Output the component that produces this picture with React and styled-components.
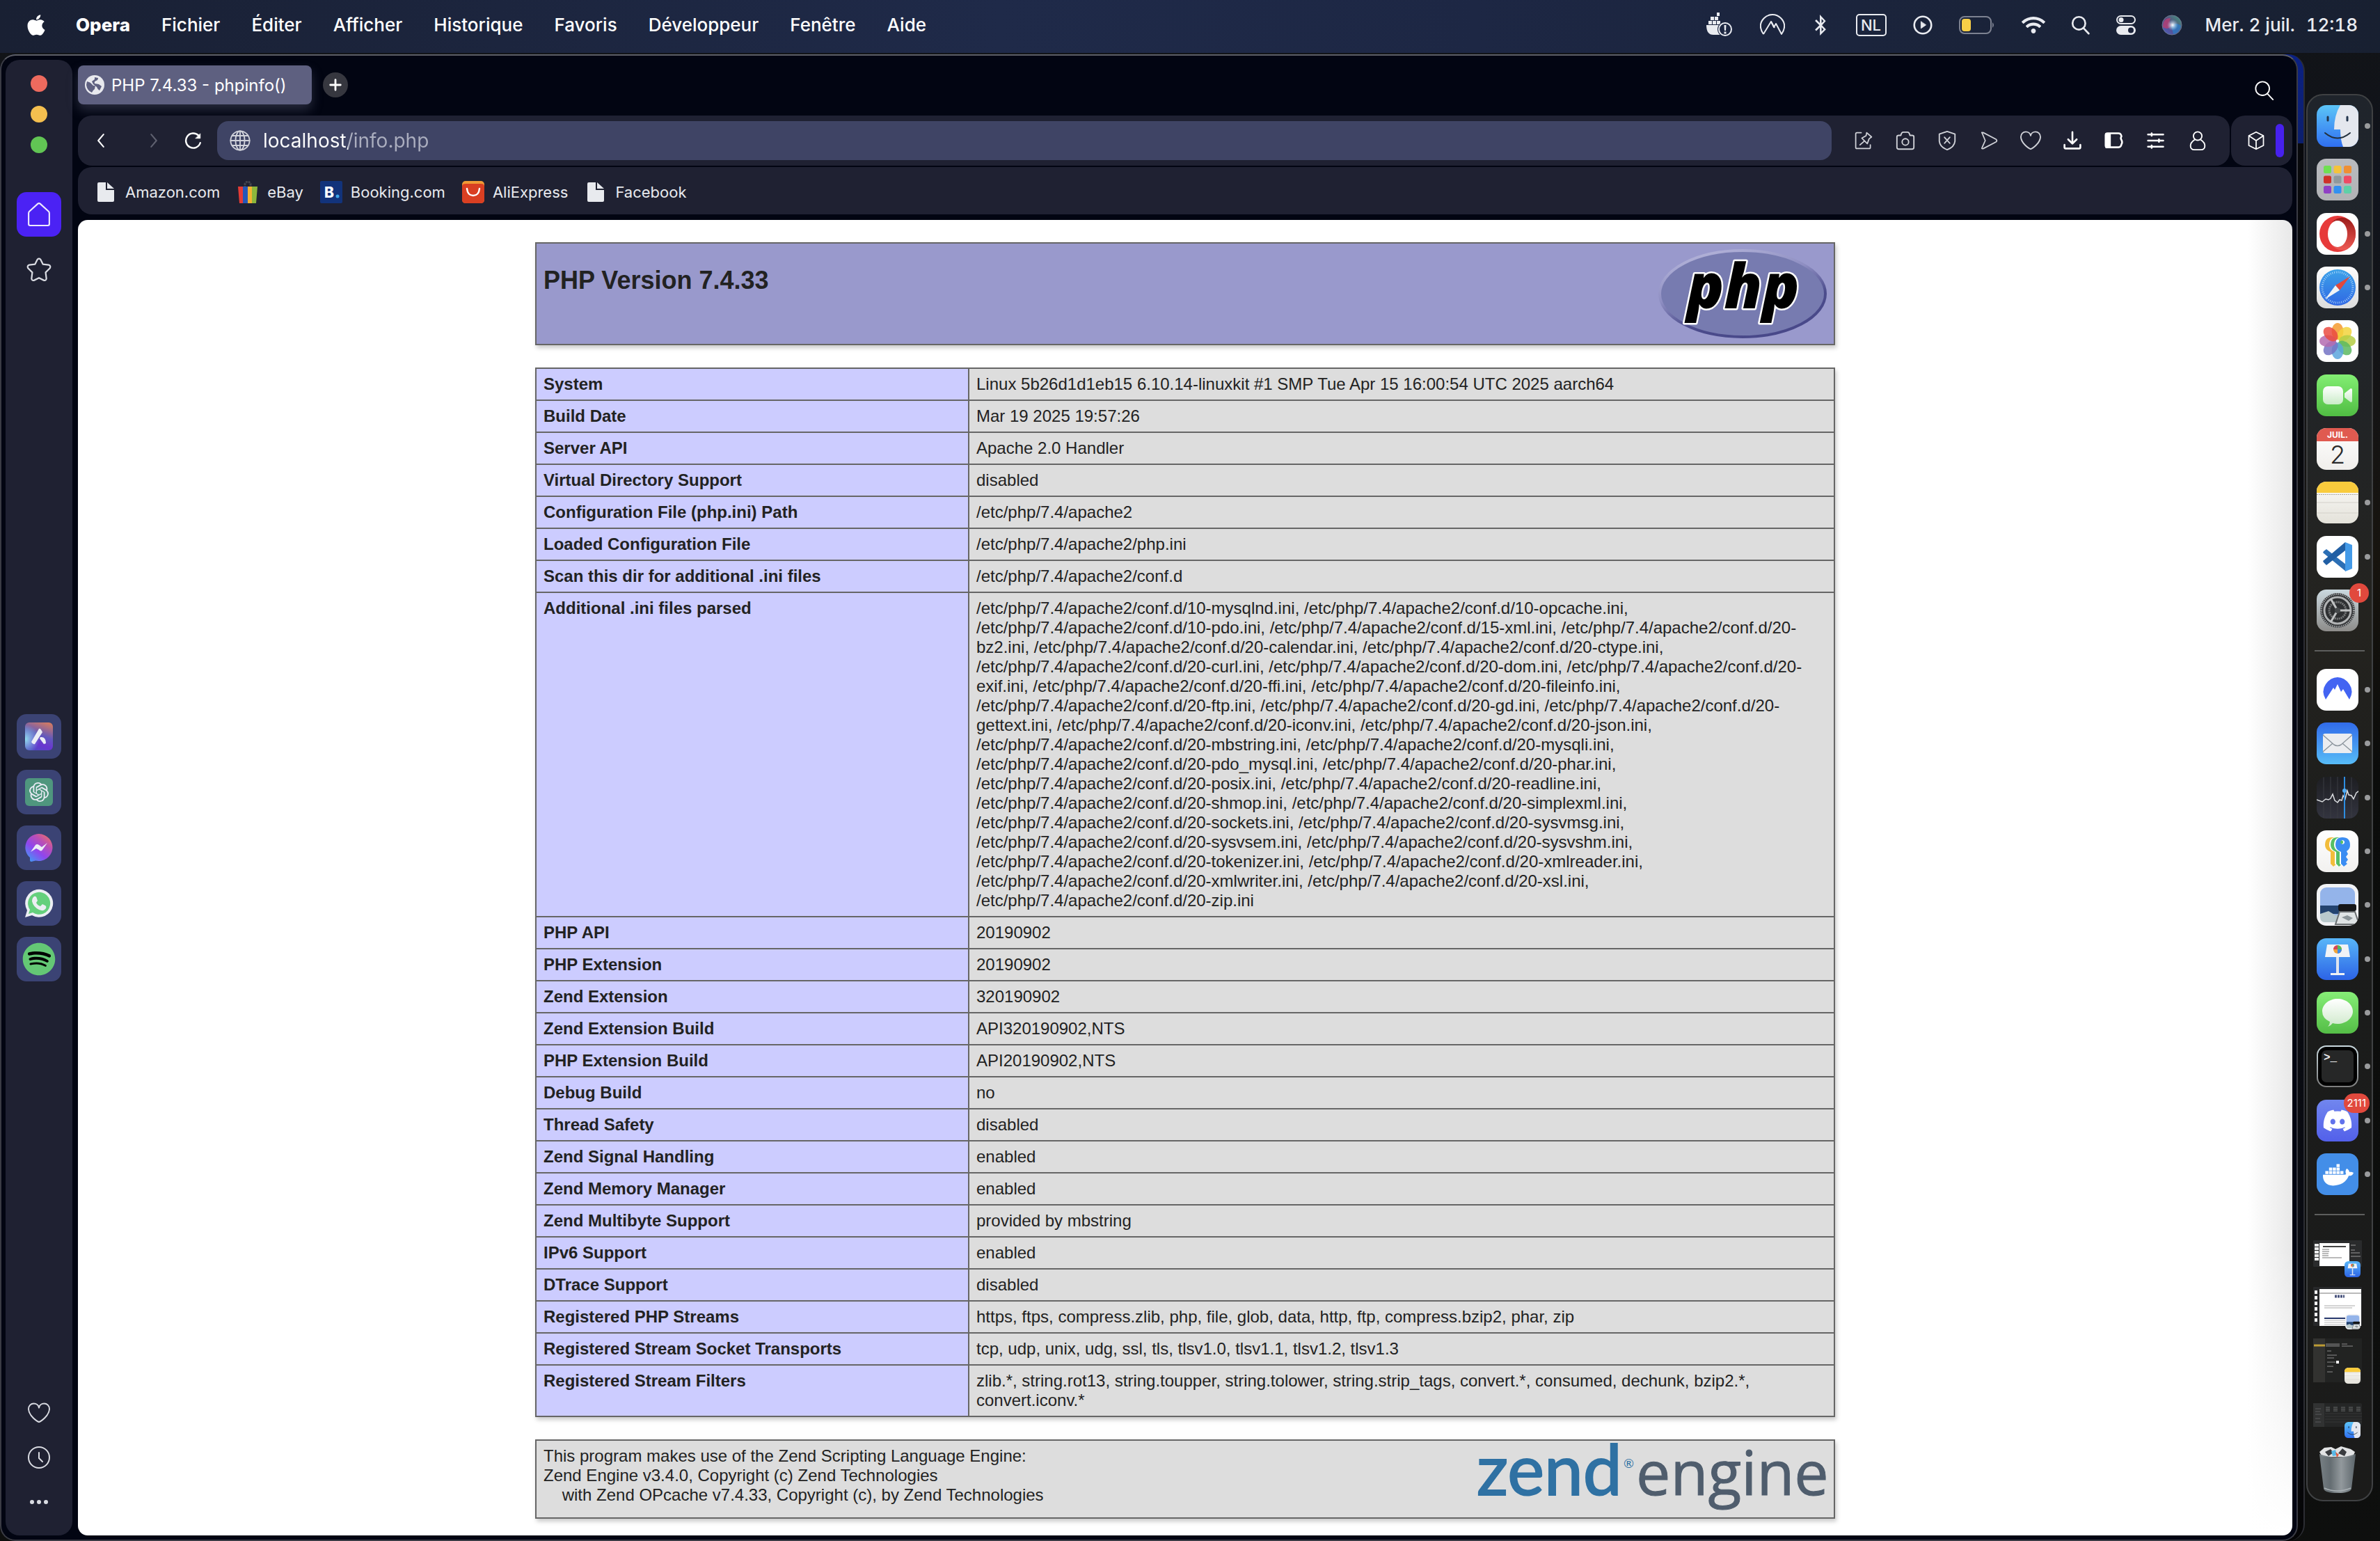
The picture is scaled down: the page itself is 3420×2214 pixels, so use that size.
import React from "react";
import styled, { createGlobalStyle, css } from "styled-components";
import { FaApple, FaBluetoothB, FaDocker, FaDiscord, FaSpotify, FaWifi } from "react-icons/fa";
import { SiOpenai } from "react-icons/si";

const ui = `Inter, "Liberation Sans", sans-serif`;
const page = `"Liberation Sans", Arial, sans-serif`;

const GlobalStyle = createGlobalStyle`
  *, *::before, *::after { box-sizing: border-box; }
  body { margin: 0; background: #0e0f10; }
  button { border: 0; padding: 0; background: none; color: inherit; font: inherit; cursor: pointer; }
  a { color: inherit; text-decoration: none; }
  svg { display: block; flex: none; }
`;

/* ---------- desktop shell ---------- */

const Desktop = styled.div`
  min-height: 100vh;
  display: flex;
  flex-direction: column;
  background: linear-gradient(180deg, #121416 0%, #10131c 12%, #17140f 36%, #0b0c0b 50%, #0e0f0e 100%);
  font-family: ${ui};
  color: #fff;
`;

const MenuBar = styled.header`
  height: 76px;
  display: flex;
  justify-content: space-between;
  align-items: center;
  padding: 0 32px 4px 40px;
  background: linear-gradient(90deg, #192033 0%, #1f2a49 42%, #1d2744 62%, #182031 100%);
  font-size: 26px;
  font-weight: 500;
  text-shadow: 0 2px 4px rgba(0, 0, 0, 0.4);
`;

const MenuList = styled.nav`
  display: flex;
  align-items: center;
  gap: 45px;
`;

const MenuItem = styled.button`
  line-height: 32px;
  font-weight: ${(p) => (p.$strong ? 800 : 500)};
`;

const AppleButton = styled.button`
  width: 24px;
  display: flex;
  justify-content: center;
  font-size: 34px;
`;

const StatusList = styled.div`
  display: flex;
  align-items: center;
  gap: 38px;
  color: #e9ebf0;
`;

const StatusButton = styled.button`
  display: flex;
  justify-content: center;
  width: ${(p) => p.$w}px;
`;

const InputSource = styled.button`
  width: 44px;
  height: 32px;
  border: 2px solid #e9ebf0;
  border-radius: 5px;
  font-size: 22px;
  line-height: 28px;
`;

const Clock = styled.button`
  display: flex;
  gap: 16px;
  margin-left: -4px;
  font-size: 26px;
  font-variant-numeric: tabular-nums;
  line-height: 32px;
`;

const Stage = styled.div`
  flex: 1;
  display: flex;
  align-items: center;
  gap: 2px;
  padding: 2px 10px 0 0;
`;

const WindowBehind = styled.div`
  flex: 1;
  min-width: 0;
  align-self: stretch;
  display: flex;
  padding-right: 8px;
  border-right: 2px solid #2c2d33;
  border-radius: 24px;
  background: linear-gradient(180deg, #0b2183 0, #0c1f6c 128px, #08090c 128px, #0a0c13 1800px, #050506 100%);
`;

const BrowserWindow = styled.main`
  flex: 1;
  min-width: 0;
  display: flex;
  gap: 8px;
  padding: 6px;
  border: 2px solid #3a3b44;
  border-top-color: #5c5e66;
  border-radius: 22px;
  background: #020512;
`;

/* ---------- browser sidebar ---------- */

const SideBar = styled.aside`
  width: 96px;
  display: flex;
  flex-direction: column;
  align-items: center;
  padding: 22px 0 16px;
  border-radius: 20px;
  background: #1f2132;
`;

const Lights = styled.div`
  display: flex;
  flex-direction: column;
  gap: 20px;
  margin-bottom: 56px;
`;

const Light = styled.button`
  width: 24px;
  height: 24px;
  border-radius: 50%;
  background: ${(p) => p.$color};
`;

const SideGroup = styled.div`
  display: flex;
  flex-direction: column;
  gap: ${(p) => p.$gap || 0}px;
`;

const AppGroup = styled(SideGroup)`
  margin: auto 0;
  padding-top: 18px;
`;

const SideButton = styled.button`
  width: 64px;
  height: 64px;
  display: grid;
  place-items: center;
  border-radius: 14px;
  color: ${(p) => p.$color || "#d9dbe2"};
  background: ${(p) => p.$bg || "transparent"};
`;

const AppTile = styled.span`
  width: 40px;
  height: 40px;
  display: grid;
  place-items: center;
  border-radius: 6px;
  font-size: 28px;
  color: #e9ebf5;
  background: ${(p) => p.$bg};
`;

/* ---------- browser chrome ---------- */

const Column = styled.div`
  flex: 1;
  min-width: 0;
  display: flex;
  flex-direction: column;
`;

const TabBar = styled.div`
  height: 80px;
  display: flex;
  align-items: flex-start;
  padding: 8px 20px 0 0;
`;

const Tab = styled.button`
  width: 336px;
  height: 56px;
  display: flex;
  align-items: center;
  gap: 10px;
  padding: 0 10px;
  border-radius: 8px;
  background: #5e6080;
  box-shadow: 0 8px 16px rgba(110, 112, 140, 0.35);
  font-size: 24px;
  color: #fff;
  white-space: nowrap;
`;

const NewTab = styled.button`
  width: 36px;
  height: 36px;
  margin: 10px auto 0 16px;
  display: grid;
  place-items: center;
  border-radius: 50%;
  background: #36373f;
`;

const TabSearch = styled.button`
  width: 40px;
  height: 72px;
  display: grid;
  place-items: center;
`;

const ToolRow = styled.div`
  display: flex;
  gap: 2px;
  margin-bottom: 2px;
`;

const panel = css`
  border-radius: 20px;
  background: #1f2132;
`;

const ToolBar = styled.div`
  ${panel}
  flex: 1;
  height: 72px;
  display: flex;
  align-items: center;
  padding-right: 16px;
`;

const NavButtons = styled.div`
  display: grid;
  grid-template-columns: 68px 80px 36px;
  margin-right: 16px;
`;

const IconButton = styled.button`
  width: ${(p) => (p.$w ? p.$w + "px" : "auto")};
  height: 56px;
  display: grid;
  place-items: center;
  color: ${(p) => p.$color || "#fff"};
`;

const Address = styled.label`
  flex: 1;
  height: 56px;
  display: flex;
  align-items: center;
  gap: 18px;
  margin-right: 16px;
  padding: 0 18px;
  border-radius: 16px;
  background: #3f4465;
  color: #d0d2da;
`;

const AddressInput = styled.input`
  flex: 1;
  min-width: 0;
  height: 40px;
  border: 0;
  padding: 0;
  outline: 0;
  font-family: ${ui};
  font-size: 28px;
  color: #fff;
  -webkit-text-fill-color: transparent;
  background: linear-gradient(90deg, #fff 122px, #abaebf 122px);
  -webkit-background-clip: text;
  background-clip: text;
`;

const SidePanelToggle = styled.div`
  ${panel}
  height: 72px;
  display: flex;
  align-items: center;
  padding: 0 12px 0 8px;
`;

const AccentBar = styled.span`
  width: 12px;
  height: 48px;
  border-radius: 6px;
  background: #4721ee;
`;

const Bookmarks = styled.nav`
  ${panel}
  height: 68px;
  display: flex;
  align-items: center;
  gap: 24px;
  margin-bottom: 8px;
  padding: 4px 24px 0;
  font-size: 22px;
  color: #e8eaee;
`;

const Bookmark = styled.a`
  display: flex;
  align-items: center;
  gap: 12px;
`;

/* ---------- phpinfo document ---------- */

const Viewport = styled.div`
  flex: 1;
  padding: 32px 0 24px;
  border-radius: 14px;
  background: linear-gradient(180deg, transparent 78%, #fff 100%),
    linear-gradient(90deg, #fff calc(100% - 64px), #e8e8e8 100%);
  font-family: ${page};
  font-size: 24px;
  line-height: 28px;
  color: #222;
`;

const Doc = styled.div`
  width: 1868px;
  max-width: 100%;
  margin: 0 auto;
  display: flex;
  flex-direction: column;
  gap: 32px;
`;

const InfoBox = styled.section`
  display: flex;
  justify-content: space-between;
  align-items: flex-start;
  padding: 8px 10px;
  border: 2px solid #666;
  background: ${(p) => p.$bg};
  box-shadow: 2px 4px 6px #ccc;
`;

const Title = styled.h1`
  margin: 24px 0 0;
  font-size: 36px;
  line-height: 42px;
`;

const Credits = styled.p`
  margin: 0;
`;

const InfoTable = styled.table`
  width: 100%;
  table-layout: fixed;
  border-collapse: collapse;
  box-shadow: 2px 4px 6px #ccc;
`;

const KeyCol = styled.col`
  width: 622px;
`;

const cell = css`
  padding: 8px 10px;
  border: 2px solid #666;
  text-align: left;
  vertical-align: top;
`;

const KeyCell = styled.th`
  ${cell}
  background: #ccf;
  font-weight: bold;
`;

const ValueCell = styled.td`
  ${cell}
  background: #ddd;
`;

/* ---------- dock ---------- */

const Dock = styled.nav`
  width: 96px;
  display: flex;
  flex-direction: column;
  padding: 14px 8px 9px;
  border: 2px solid #3f4143;
  border-radius: 24px;
  background: linear-gradient(180deg, #1f242b 0%, #20252b 12%, #24231f 38%, #1b1c1b 55%, #1b1b1a 100%);
`;

const DockGroup = styled.div`
  height: 756px;
  display: flex;
  flex-direction: column;
  justify-content: space-between;
`;

const DockItem = styled.button`
  position: relative;
  width: 86px;
  height: 60px;
  display: grid;
  grid-template-columns: 70px 16px;
  place-items: center;
`;

const RunningDot = styled.span`
  width: 8px;
  height: 8px;
  border-radius: 50%;
  background: #9a9b9d;
`;

const Badge = styled.span`
  position: absolute;
  top: -9px;
  right: ${(p) => (p.$wide ? 5 : 6)}px;
  min-width: 28px;
  height: 28px;
  padding: 0 5px;
  border-radius: 14px;
  background: #e1493d;
  color: #fff;
  font-size: 15px;
  line-height: 28px;
  text-align: center;
`;

const DockRule = styled.hr`
  width: 72px;
  height: 2px;
  margin: ${(p) => (p.$last ? "27px 0 36px 2px" : "27px 0 25px 2px")};
  border: 0;
  background: #5d5e5d;
`;

const DockWindows = styled.div`
  display: flex;
  flex-direction: column;
  gap: 12px;
`;

const DockWindow = styled.button`
  width: 70px;
  display: flex;
  justify-content: center;
`;

/* ---------- line icons (32 unit grid) ---------- */

const Line = ({ d, size = 32, sw = 2, fill = "none", children }) => (
  <svg width={size} height={size} viewBox="0 0 32 32" fill={fill} stroke="currentColor" strokeWidth={sw} strokeLinecap="round" strokeLinejoin="round" aria-hidden="true">
    {d && <path d={d} />}
    {children}
  </svg>
);

const HEART = "M16 29C13 28 1.500 20 1 10.500C1 5.500 4.500 2.500 8.500 2.500C12.500 2.500 15.500 5 16 8.500C16.500 5 19.500 2.500 23.500 2.500C27.500 2.500 31 5.500 31 10.500C30.500 20 19 28 16 29Z";

const SearchIcon = ({ size = 32, sw = 2 }) => (
  <Line size={size} sw={sw}><circle cx="13" cy="13" r="10.500" /><path d="M20.500 21L29 30" /></Line>
);

const FileIcon = () => (
  <svg width="32" height="32" viewBox="0 0 32 32" fill="#e8eaee" aria-hidden="true">
    <path d="M4 4q0-2 2-2h10v11h12v15q0 2-2 2H6q-2 0-2-2zM18 2l10 9H18z" />
  </svg>
);

const EbayIcon = () => (
  <svg width="32" height="32" viewBox="0 0 32 32" aria-hidden="true">
    <path d="M12 10V4q4-6 8 0v6" fill="none" stroke="#43464f" strokeWidth="3" strokeDasharray="3 1" />
    <path d="M2 8h7v24H4z" fill="#e43b35" /><path d="M9 8h8v24H9z" fill="#2557b8" />
    <path d="M16 8h7v24h-7z" fill="#f3b231" /><path d="M22 8h8l-2 24h-6z" fill="#8cb63c" />
  </svg>
);

const BookingIcon = () => (
  <svg width="32" height="32" viewBox="0 0 32 32" aria-hidden="true">
    <rect width="32" height="32" rx="2" fill="#12337b" />
    <text x="6" y="24" fontFamily="Inter, sans-serif" fontWeight="800" fontSize="21" fill="#fff">B</text>
    <circle cx="25" cy="22" r="2.500" fill="#3da5e8" />
  </svg>
);

const AliIcon = () => (
  <svg width="32" height="32" viewBox="0 0 32 32" aria-hidden="true">
    <rect width="32" height="32" rx="5" fill="#ef9a35" />
    <path d="M0 8q0-4 5-4h22q5 0 5 4v19q0 5-5 5H5q-5 0-5-5z" fill="#d93f22" />
    <path d="M7 11q1 10 9 10t9-10" fill="none" stroke="#fff" strokeWidth="2.500" strokeLinecap="round" />
  </svg>
);

const TabGlobe = () => (
  <svg width="28" height="28" viewBox="0 0 28 28" aria-hidden="true">
    <circle cx="14" cy="14" r="14" fill="#e8e9ee" />
    <path d="M3 9q5 1 7 4t5 2l-1 5q-3 2-4 5Q3 22 2 14zM14 3l5 1q0 3-3 4t-2 4l6 1 4 3-3 6q-3-2-4-5l-5-4-2-4 4-3z" fill="#5e6080" />
  </svg>
);

const GlobeIcon = () => (
  <Line size={30}>
    <circle cx="16" cy="16" r="14.500" /><ellipse cx="16" cy="16" rx="7" ry="14.500" />
    <path d="M16 1.500v29M1.500 16h29M4 8.500h24M4 23.500h24" />
  </Line>
);

/* ---------- menu bar drawings ---------- */

const DockerAlert = () => (
  <svg width="40" height="36" viewBox="0 0 40 36" fill="#e9ebf0" aria-hidden="true">
    <path d="M1 18h24q-5 5-4 14H11Q1 32 1 18z" />
    <path d="M4 12h5v5H4zM10 12h5v5h-5zM16 12h5v5h-5zM7 6h5v5H7zM13 6h5v5h-5zM16 0h4v5h-4z" />
    <circle cx="28" cy="24" r="11" fill="#1c2641" /><circle cx="28" cy="24" r="9" fill="none" stroke="#e9ebf0" strokeWidth="2" />
    <path d="M26.500 18h3l-.5 8h-2zM26.500 27.500h3v3h-3z" />
  </svg>
);

const NordOutline = () => (
  <svg width="36" height="32" viewBox="0 0 36 32" fill="none" stroke="#e9ebf0" strokeWidth="2" strokeLinejoin="round" aria-hidden="true">
    <path d="M5 29C-1 20 0 12 6 6Q11 1 18 1T30 6C36 12 37 20 31 29L23 14l-3 5-4-8-11 18" /><path d="M16 11l5 9" />
  </svg>
);

const Battery = () => (
  <svg width="52" height="26" viewBox="0 0 52 26" aria-hidden="true">
    <rect x="1" y="1" width="45" height="24" rx="7" fill="none" stroke="#7d8291" strokeWidth="2" />
    <rect x="4" y="4" width="13" height="18" rx="4" fill="#f8cf47" /><path d="M48 9q4 4 0 8z" fill="#7d8291" />
  </svg>
);

const ControlCenter = () => (
  <svg width="28" height="28" viewBox="0 0 28 28" aria-hidden="true">
    <rect x="1" y="1" width="26" height="11" rx="5.500" fill="none" stroke="#e9ebf0" strokeWidth="2" /><circle cx="7" cy="6.500" r="3.500" fill="#e9ebf0" />
    <rect y="15" width="28" height="13" rx="6.500" fill="#e9ebf0" /><circle cx="21" cy="21.500" r="4" fill="#1b233a" />
  </svg>
);

const Siri = () => (
  <svg width="30" height="30" viewBox="0 0 30 30" aria-hidden="true">
    <defs>
      <linearGradient id="siri" x1="0" y1="1" x2="1" y2="0"><stop offset="0" stopColor="#4a62c9" /><stop offset="0.500" stopColor="#594b80" /><stop offset="1" stopColor="#3da07d" /></linearGradient>
      <radialGradient id="siriGlow"><stop offset="0" stopColor="#fff" /><stop offset="1" stopColor="#9fd6f0" stopOpacity="0" /></radialGradient>
    </defs>
    <circle cx="15" cy="15" r="14" fill="url(#siri)" stroke="#6f7890" /><path d="M2 18Q2 5 13 5q-3 6 1 10-3 8-12 3z" fill="#b93e72" opacity="0.800" />
    <path d="M14 16q7-6 14 0-2 11-11 12z" fill="#2d7ac4" opacity="0.800" /><circle cx="16" cy="15" r="8" fill="url(#siriGlow)" />
  </svg>
);

/* ---------- logos of the document ---------- */

const PhpLogo = () => (
  <svg width="242" height="128" viewBox="0 0 242 128" overflow="visible" role="img" aria-label="PHP logo">
    <defs>
      <linearGradient id="phpRim" x1="0.200" y1="0" x2="0.700" y2="1">
        <stop offset="0" stopColor="#b5b5da" /><stop offset="0.400" stopColor="#8e8ec2" /><stop offset="0.700" stopColor="#4c4c8c" /><stop offset="1" stopColor="#484889" />
      </linearGradient>
    </defs>
    <ellipse cx="121" cy="64" rx="119" ry="62" fill="#777bb0" stroke="url(#phpRim)" strokeWidth="4" />
    <text x="41" y="85" fontFamily='"Open Sans", sans-serif' fontSize="88" fontWeight="800" fontStyle="italic" fill="#000" stroke="#fff" strokeWidth="5" strokeLinejoin="round" paintOrder="stroke">php</text>
  </svg>
);

const ZendLogo = () => (
  <svg width="500" height="94" viewBox="0 0 500 94" overflow="visible" role="img" aria-label="Zend engine logo">
    <text x="-3" y="70" fontFamily="Lato, sans-serif" fontSize="100" fill="#2f71a3" stroke="#2f71a3" strokeWidth="2">zend</text>
    <text x="208" y="31" fontFamily="Lato, sans-serif" fontSize="18" fill="#2f71a3">®</text>
    <text x="226" y="70" fontFamily='"Open Sans", sans-serif' fontSize="88" fill="#4f5d6d" stroke="#4f5d6d" strokeWidth="1">engine</text>
  </svg>
);

/* ---------- dock artwork (60 unit grid) ---------- */

const Grad = ({ id, from, to }) => (
  <linearGradient id={id} x1="0" y1="0" x2="0" y2="1"><stop offset="0" stopColor={from} /><stop offset="1" stopColor={to} /></linearGradient>
);

const Tile = ({ id, from, to = from, size = 60, children }) => (
  <svg width={size} height={size} viewBox="0 0 60 60" aria-hidden="true">
    <defs><Grad id={`g-${id}`} from={from} to={to} /><clipPath id={`c-${id}`}><rect width="60" height="60" rx="14" /></clipPath></defs>
    <rect width="60" height="60" rx="14" fill={`url(#g-${id})`} />
    <g clipPath={`url(#c-${id})`}>{children}</g>
  </svg>
);

const Finder = ({ id = "finder", size }) => (
  <Tile id={id} from="#5cc5f8" to="#2f6ff0" size={size}>
    <path d="M34 0Q25 15 25 35h9q0 15 4 25h22V0z" fill="#e4e7ee" />
    <path d="M16 17v5M44 17v5" stroke="#22344c" strokeWidth="3" strokeLinecap="round" />
    <path d="M12 40q18 15 36 0" fill="none" stroke="#22303c" strokeWidth="2" strokeLinecap="round" />
  </Tile>
);

const LAUNCH = ["#6fe052", "#f5c33b", "#ee8f34", "#cf3028", "#8f989b", "#ef4a64", "#9040c4", "#3390f0", "#5fd0a8"];
const Launchpad = () => (
  <Tile id="launch" from="#b9bbbf" to="#b1b2b5">
    {LAUNCH.map((c, i) => <rect key={c} x={10 + (i % 3) * 14.5} y={10 + Math.floor(i / 3) * 14.5} width="11" height="11" rx="2.500" fill={c} />)}
  </Tile>
);

const Opera = () => (
  <Tile id="opera" from="#fff">
    <defs><linearGradient id="operaBack" x1="0" y1="0" x2="0" y2="1"><stop offset="0" stopColor="#9c1c1a" /><stop offset="1" stopColor="#ee5a54" /></linearGradient></defs>
    <circle cx="30" cy="30" r="26" fill="#e73a3a" />
    <path d="M22 13Q34 2 47 10 56 18 56 30T47 50Q34 58 22 47 44 51 44 30T22 13z" fill="url(#operaBack)" />
    <ellipse cx="30" cy="30" rx="14" ry="19" fill="#fff" />
  </Tile>
);

const Safari = () => (
  <Tile id="safari" from="#fdfdfd" to="#dcdcdc">
    <defs><Grad id="sea" from="#3ca2e9" to="#3068e4" /></defs>
    <circle cx="30" cy="30" r="26" fill="url(#sea)" />
    <circle cx="30" cy="30" r="22" fill="none" stroke="#b8dcfa" strokeWidth="3" strokeDasharray="0.800 2" />
    <path d="M48 14L33 34l-6-7z" fill="#e2483c" /><path d="M12 47l15-20 6 7z" fill="#f1f3f6" />
  </Tile>
);

const PETALS = ["#f49b2f", "#f2d43c", "#b4cc44", "#5cb860", "#5aa4dd", "#7473c4", "#b46bb0", "#ea4b41"];
const Photos = () => (
  <Tile id="photos" from="#fff">
    {PETALS.map((c, i) => <ellipse key={c} cx="30" cy="16" rx="8.500" ry="12" fill={c} opacity="0.850" transform={`rotate(${i * 45} 30 30)`} />)}
  </Tile>
);

const FaceTime = () => (
  <Tile id="facetime" from="#83ee73" to="#50bd43">
    <defs><Grad id="cam" from="#fff" to="#c9ecc7" /></defs>
    <rect x="9" y="17" width="29" height="26" rx="7" fill="url(#cam)" /><path d="M40 27l9-7q2 0 2 2v16q0 2-2 2l-9-7z" fill="url(#cam)" />
  </Tile>
);

const Calendar = () => (
  <Tile id="calendar" from="#fff" to="#f0eeeb">
    <path d="M0 0h60v19H0z" fill="#e05a50" />
    <text x="30" y="14" textAnchor="middle" fontFamily="Inter, sans-serif" fontSize="12" fontWeight="700" fill="#fff">JUIL.</text>
    <text x="30" y="51" textAnchor="middle" fontFamily="Inter, sans-serif" fontSize="36" fontWeight="300" fill="#2b2b2b">2</text>
  </Tile>
);

const Notes = ({ id = "notes", size }) => (
  <Tile id={id} from="#fbfaf8" to="#e4e2da" size={size}>
    <path d="M0 0h60v16H0z" fill="#f9cb3c" /><path d="M0 18.500h60" stroke="#a9a7a0" strokeDasharray="2 1" /><path d="M0 30h60M0 45h60" stroke="#d2d0c9" />
  </Tile>
);

const VsCode = () => (
  <Tile id="vscode" from="#fff">
    <path d="M10 22l4-3 28 22v10L9 24z" fill="#2c6fb5" /><path d="M10 38l-1-2L41 9v12L14 42z" fill="#215fa4" />
    <path d="M41 9l10 4v34l-10 4z" fill="#439ae8" />
  </Tile>
);

const Settings = () => (
  <Tile id="settings" from="#cbd9df" to="#8d8c8a">
    <circle cx="30" cy="30" r="25" fill="#2e3032" /><circle cx="30" cy="30" r="23.500" fill="none" stroke="#9b9ea0" strokeWidth="3" strokeDasharray="1.500 1.200" />
    <circle cx="30" cy="30" r="19" fill="none" stroke="#b0b2b3" strokeWidth="3" /><circle cx="30" cy="30" r="12" fill="none" stroke="#77797a" strokeWidth="3" strokeDasharray="2 1" />
    <path d="M30 30h19M30 30L20 13M30 30L20 47" stroke="#bfc1c2" strokeWidth="3" /><circle cx="30" cy="30" r="4" fill="#46494b" />
  </Tile>
);

const Nord = () => (
  <Tile id="nord" from="#fff">
    <path d="M13 44Q6 32 13 22 20 12 30 12t17 10 0 22L38 29l-3 4-5-11-4 8-2-3z" fill="#4364f2" />
  </Tile>
);

const Mail = () => (
  <Tile id="mail" from="#316bea" to="#57bcf7">
    <rect x="9" y="16" width="42" height="28" rx="3" fill="#ebedf0" /><path d="M9 18l16 14q5 3 10 0l16-14M9 42l14-12M51 42L37 30" fill="none" stroke="#8e979f" strokeWidth="1.500" />
  </Tile>
);

const Stocks = () => (
  <Tile id="stocks" from="#1d1e22" to="#33343f">
    <path d="M10 0v60M20 0v60M30 0v60M50 0v60" stroke="#3b3c43" />
    <path d="M0 33l8 3 5-4 4 1 3-2 3-6 3 9 4 3 3-4 3 1 2-7 3 5 3-12 2 6 4 1 3 5 4-9 6-4" fill="none" stroke="#dcdee1" strokeWidth="1.500" />
    <path d="M40 0v60" stroke="#2d8de0" strokeWidth="2" /><circle cx="40" cy="20" r="3" fill="#55adf2" />
  </Tile>
);

const Key = ({ x, color }) => (
  <path transform={`translate(${x} 0)`} fill={color} fillRule="evenodd" d="M10 10q11 0 11 11 0 6-5 9l2 4-3 4 3 4-3 4 2 2-5 4-4-4V31q-8-3-8-10 0-11 10-11zm0 4a3 3 0 1 0 .1 0z" />
);
const Passwords = () => (
  <Tile id="keys" from="#fff" to="#f2f1ef"><Key x={12} color="#f2bd3c" /><Key x={18} color="#fff" /><Key x={20} color="#56bf66" /><Key x={25} color="#fff" /><Key x={27} color="#3b8df2" /></Tile>
);

const Preview = ({ id = "preview", size }) => (
  <Tile id={id} from="#f2f3f5" size={size}>
    <rect x="5" y="5" width="50" height="50" rx="9" fill="#94b4ea" /><path d="M5 31h50v12H5z" fill="#23436f" /><path d="M5 43l12-4 10 6 28-4v14H12q-7 0-7-8z" fill="#b9c9cc" />
    <rect x="31" y="29" width="26" height="10" rx="3" fill="#151618" /><path d="M33 40h22l6 18H27z" fill="#dfe3e4" stroke="#6a6e70" strokeWidth="2" />
    <path d="M36 48l8-3 8 4-6 4z" fill="#8c9599" />
  </Tile>
);

const Keynote = ({ id = "keynote", size }) => (
  <Tile id={id} from="#58b6f8" to="#2c63e6" size={size}>
    <path d="M15 9h30l3 18H12z" fill="#f1f3f6" /><path d="M28 27h4v24h-4z" fill="#dfe4ee" /><path d="M20 50h20v3H20z" fill="#eef1f5" />
    <circle cx="30" cy="16" r="6" fill="#f0a23a" /><path d="M30 16v-6a6 6 0 0 1 6 6z" fill="#55b85a" /><path d="M30 16h6a6 6 0 0 1-6 6z" fill="#3d8be8" /><path d="M30 16h-6a6 6 0 0 1 6-6z" fill="#d8435a" />
  </Tile>
);

const Messages = () => (
  <Tile id="messages" from="#86ee77" to="#54bd46">
    <defs><Grad id="bubble" from="#fff" to="#cfe9cb" /></defs>
    <path d="M30 10c12 0 22 8 22 18S42 46 30 46q-4 0-7-1-3 4-7 5 3-3 3-7Q8 38 8 28c0-10 10-18 22-18z" fill="url(#bubble)" />
  </Tile>
);

const Terminal = () => (
  <Tile id="terminal" from="#c9d8de" to="#7d7d7d">
    <rect x="2" y="2" width="56" height="56" rx="12" fill="#000" /><rect x="7" y="7" width="46" height="46" rx="7" fill="#262727" />
    <text x="10" y="22" fontFamily='"Liberation Mono", monospace' fontSize="16" fontWeight="700" fill="#eee">&gt;_</text>
  </Tile>
);

const Discord = () => (
  <Tile id="discord" from="#7186ee" to="#5360ea"><FaDiscord x="8" y="8" size={44} color="#fff" /></Tile>
);

const Docker = () => (
  <Tile id="docker" from="#438ee8"><FaDocker x="9" y="9" size={44} color="#fff" /></Tile>
);

const Trash = () => (
  <svg width="54" height="68" viewBox="0 0 54 68" aria-hidden="true">
    <defs><linearGradient id="bin" x1="0" y1="0" x2="1" y2="0"><stop offset="0" stopColor="#7d868b" /><stop offset="0.300" stopColor="#697277" /><stop offset="0.600" stopColor="#9aa1a5" /><stop offset="1" stopColor="#606a70" /></linearGradient></defs>
    <path d="M1 8L8 2l10-1 6 3 8-4 14 4 6 4-3 7H5z" fill="#e2e3e4" />
    <path d="M1 11q25 9 52 0l-6 50q-2 6-20 6T7 61z" fill="url(#bin)" opacity="0.940" /><path d="M8 60q18 8 38 0" fill="none" stroke="#aab1b5" strokeWidth="1.500" />
    <path d="M9 8l8-4 4 5-7 5zM28 10l6-7 6 5-3 6z" fill="#3a3c40" /><path d="M18 7l6-2 2 8-6 1z" fill="#59b8e6" /><path d="M24 8l5 4-3 4z" fill="#e05a3d" />
  </svg>
);

const MiniSlides = () => (
  <svg width="70" height="55" viewBox="0 0 70 55" aria-hidden="true">
    <rect width="70" height="38" rx="1" fill="#2a2b2c" /><rect x="9" y="4" width="43" height="33" fill="#fff" />
    {[5, 10, 15, 20, 25].map((y) => <rect key={y} x="2" y={y} width="6" height="4" fill="#ececec" />)}
    <path d="M14 9h33" stroke="#444" strokeWidth="2" /><path d="M13 13h10M13 16h10M13 19h9M13 22h9M13 25h28" stroke="#777" /><path d="M54 7h7M54 14h6M54 18h13M54 23h14" stroke="#999" />
    <svg x="45" y="30" width="24" height="24"><Keynote id="keynoteMini" size={23} /></svg>
  </svg>
);

const MiniPdf = () => (
  <svg width="70" height="62" viewBox="0 0 70 62" aria-hidden="true">
    <rect width="70" height="56" rx="1" fill="#27282a" /><rect x="9" y="3" width="60" height="53" fill="#fff" /><path d="M9 9h60" stroke="#777" />
    {[5, 13, 21, 29, 37, 45].map((y) => <rect key={y} x="2" y={y} width="4" height="5" fill="#f3f3f3" />)}
    <path d="M31 13.500h14" stroke="#4a557e" strokeWidth="4" strokeDasharray="3 1" /><path d="M16 27h44M16 30h40" stroke="#aaa" />
    <path d="M16 45h30" stroke="#26376c" strokeWidth="2" /><path d="M16 48h30M16 51h30M16 54h30" stroke="#bbb" />
    <svg x="46" y="39" width="24" height="23"><Preview id="previewMini" size={22} /></svg>
  </svg>
);

const MiniNotes = () => (
  <svg width="70" height="81" viewBox="0 0 70 81" aria-hidden="true">
    <rect y="0" width="70" height="63" fill="#222322" /><rect width="17" height="63" fill="#323230" /><path d="M1 10h16" stroke="#bd9b35" strokeWidth="3" />
    <rect x="18" y="7" width="20" height="5" fill="#555" /><path d="M41 8h8M41 11h16M20 18h6M20 24h14M20 28h10M20 34h12M20 40h9M20 48h8" stroke="#8b8b8b" /><rect x="33" y="32" width="4" height="4" fill="#fff" />
    <svg x="45" y="42" width="24" height="24"><Notes id="notesMini" size={23} /></svg>
  </svg>
);

const MiniFinder = () => (
  <svg width="70" height="50" viewBox="0 0 70 50" aria-hidden="true">
    <rect width="70" height="34" rx="2" fill="#252626" /><rect width="16" height="34" fill="#313232" />
    <path d="M18 6h50M18 8.500h50M18 11h50" stroke="#6b6c6c" strokeDasharray="6 5" /><path d="M17 15h53M17 19h53M17 23h53M17 27h53" stroke="#363737" />
    <path d="M3 8h8M3 12h7M3 16h9M3 22h7M3 27h8" stroke="#5a5b5c" />
    <svg x="45" y="27" width="24" height="23"><Finder id="finderMini" size={23} /></svg>
  </svg>
);

/* ---------- data ---------- */

const MENUS = ["Fichier", "Éditer", "Afficher", "Historique", "Favoris", "Développeur", "Fenêtre", "Aide"];

const BOOKMARKS = [
  ["Amazon.com", FileIcon],
  ["eBay", EbayIcon],
  ["Booking.com", BookingIcon],
  ["AliExpress", AliIcon],
  ["Facebook", FileIcon],
];

const ini = (name) => `/etc/php/7.4/apache2/conf.d/${name}.ini`;
const INI_FILES = [
  "10-mysqlnd", "10-opcache", "10-pdo", "15-xml", "20-bz2", "20-calendar", "20-ctype", "20-curl", "20-dom", "20-exif", "20-ffi",
  "20-fileinfo", "20-ftp", "20-gd", "20-gettext", "20-iconv", "20-json", "20-mbstring", "20-mysqli", "20-pdo_mysql", "20-phar",
  "20-posix", "20-readline", "20-shmop", "20-simplexml", "20-sockets", "20-sysvmsg", "20-sysvsem", "20-sysvshm", "20-tokenizer",
  "20-xmlreader", "20-xmlwriter", "20-xsl", "20-zip",
].map(ini).join(", ");

const ROWS = [
  ["System", "Linux 5b26d1d1eb15 6.10.14-linuxkit #1 SMP Tue Apr 15 16:00:54 UTC 2025 aarch64"],
  ["Build Date", "Mar 19 2025 19:57:26"],
  ["Server API", "Apache 2.0 Handler"],
  ["Virtual Directory Support", "disabled"],
  ["Configuration File (php.ini) Path", "/etc/php/7.4/apache2"],
  ["Loaded Configuration File", "/etc/php/7.4/apache2/php.ini"],
  ["Scan this dir for additional .ini files", "/etc/php/7.4/apache2/conf.d"],
  ["Additional .ini files parsed", INI_FILES],
  ["PHP API", "20190902"],
  ["PHP Extension", "20190902"],
  ["Zend Extension", "320190902"],
  ["Zend Extension Build", "API320190902,NTS"],
  ["PHP Extension Build", "API20190902,NTS"],
  ["Debug Build", "no"],
  ["Thread Safety", "disabled"],
  ["Zend Signal Handling", "enabled"],
  ["Zend Memory Manager", "enabled"],
  ["Zend Multibyte Support", "provided by mbstring"],
  ["IPv6 Support", "enabled"],
  ["DTrace Support", "disabled"],
  ["Registered PHP Streams", "https, ftps, compress.zlib, php, file, glob, data, http, ftp, compress.bzip2, phar, zip"],
  ["Registered Stream Socket Transports", "tcp, udp, unix, udg, ssl, tls, tlsv1.0, tlsv1.1, tlsv1.2, tlsv1.3"],
  ["Registered Stream Filters", "zlib.*, string.rot13, string.toupper, string.tolower, string.strip_tags, convert.*, consumed, dechunk, bzip2.*, convert.iconv.*"],
];

const DOCK_TOP = [
  ["Finder", Finder, true], ["Launchpad", Launchpad, false], ["Opera", Opera, true], ["Safari", Safari, true], ["Photos", Photos, false],
  ["FaceTime", FaceTime, false], ["Calendrier", Calendar, false], ["Notes", Notes, true], ["Visual Studio Code", VsCode, true], ["Réglages", Settings, false, "1"],
];

const DOCK_RUNNING = [
  ["NordVPN", Nord, true], ["Mail", Mail, true], ["Bourse", Stocks, true], ["Mots de passe", Passwords, true], ["Aperçu", Preview, true],
  ["Keynote", Keynote, true], ["Messages", Messages, true], ["Terminal", Terminal, true], ["Discord", Discord, true, "2111"], ["Docker", Docker, true],
];

const DOCK_WINDOWS = [["Présentation", MiniSlides], ["Document", MiniPdf], ["Notes", MiniNotes], ["Dossier", MiniFinder], ["Corbeille", Trash]];

const EXTENSIONS = [
  ["Épingler", "#d0d2d8", <Line key="i" size={28} d="M12 3H5q-2 0-2 2v22q0 2 2 2h20q2 0 2-2v-4M21 3l8 7-4 3-3 8-9-9 7-4zM17 17L10 23" />],
  ["Capture", "#d0d2d8", <Line key="i" size={30}><path d="M3 10q0-2 3-2h3q1-5 4-5h6q3 0 4 5h3q3 0 3 2v16q0 3-3 3H6q-3 0-3-3z" /><circle cx="16" cy="18" r="5" /></Line>],
  ["Protection", "#d0d2d8", <Line key="i" size={30} d="M16 2l12 4v11q-1 9-12 13Q5 26 4 17V6zM12 11l8 9M20 11l-8 9" />],
  ["Envoyer", "#d0d2d8", <Line key="i" size={28} d="M5 4Q3 2 7 3l21 11q2 2 0 4L7 29q-4 1-2-2l5-11z" />],
  ["Favori", "#d0d2d8", <Line key="i" size={30} d={HEART} />],
  ["Téléchargements", "#fff", <Line key="i" size={28} sw={3} d="M16 2v18M9 14l7 7 7-7M3 23v4q0 2 2 2h22q2 0 2-2v-4" />],
  ["Panneau", "#fff", <Line key="i" size={28} sw={3}><path d="M5 4h18q4 0 5 5-2 3 0 6 2 4 0 7-1 5-5 5H5q-3 0-3-3V7q0-3 3-3z" /><path d="M3 5h6v22H3z" fill="currentColor" /></Line>],
  ["Configuration", "#fff", <Line key="i" size={28} sw={3} d="M3 6h25M3 16h25M3 26h25M9 4v4M21 14v4M9 24v4" />],
  ["Profil", "#fff", <Line key="i" size={30}><circle cx="16" cy="9" r="6.500" /><path d="M11 15q-6 4-6 9 0 6 6 6h10q6 0 6-6 0-5-6-9" /></Line>],
];

const renderDockItem = ([name, Art, running, badge]) => (
  <DockItem key={name} aria-label={name}>
    <Art />
    {running ? <RunningDot /> : <span />}
    {badge && <Badge $wide={badge.length > 1}>{badge}</Badge>}
  </DockItem>
);

export default function App() {
  return (
    <Desktop>
      <GlobalStyle />
      <MenuBar>
        <MenuList>
          <AppleButton aria-label="Apple"><FaApple /></AppleButton>
          <MenuItem $strong>Opera</MenuItem>
          {MENUS.map((m) => <MenuItem key={m}>{m}</MenuItem>)}
        </MenuList>
        <StatusList>
          <StatusButton $w={40} aria-label="Docker"><DockerAlert /></StatusButton>
          <StatusButton $w={36} aria-label="NordVPN"><NordOutline /></StatusButton>
          <StatusButton $w={26} aria-label="Bluetooth"><FaBluetoothB size={30} /></StatusButton>
          <InputSource>NL</InputSource>
          <StatusButton $w={28} aria-label="Lecture">
            <Line size={28} sw={3}><circle cx="16" cy="16" r="14" /><path d="M13 10.500v11l8-5.500z" fill="currentColor" strokeWidth="1" /></Line>
          </StatusButton>
          <StatusButton $w={52} aria-label="Batterie"><Battery /></StatusButton>
          <StatusButton $w={34} aria-label="Wi-Fi"><FaWifi size={34} /></StatusButton>
          <StatusButton $w={26} aria-label="Rechercher"><SearchIcon size={28} sw={3} /></StatusButton>
          <StatusButton $w={28} aria-label="Centre de contrôle"><ControlCenter /></StatusButton>
          <StatusButton $w={28} aria-label="Siri"><Siri /></StatusButton>
          <Clock><span>Mer. 2 juil.</span><span>12:18</span></Clock>
        </StatusList>
      </MenuBar>

      <Stage>
        <WindowBehind>
          <BrowserWindow>
            <SideBar>
              <Lights>
                <Light $color="#ed6a5e" aria-label="Fermer" />
                <Light $color="#f4bf4f" aria-label="Réduire" />
                <Light $color="#61c554" aria-label="Agrandir" />
              </Lights>
              <SideGroup $gap={16}>
                <SideButton $bg="#4b22f4" $color="#eeeafd" aria-label="Accueil">
                  <Line size={34} d="M14.500 1.500q1.500-1 3 0L29 12q1 1 1 2.500V29q0 2-2 2H4q-2 0-2-2V14.500Q2 13 3 12z" />
                </SideButton>
                <SideButton aria-label="Favoris">
                  <Line size={36} d="M14 2.500q2-2 4 0l3 6 7.500 1q3 1 1.500 4l-5.500 5.500 1 8q-.5 3-3.500 2L16 26l-6 3q-3 1-3.500-2l1-8L2 13.500q-1.500-3 1.500-4l7.500-1z" />
                </SideButton>
              </SideGroup>
              <AppGroup $gap={16}>
                <SideButton $bg="#3b4374" aria-label="Aria">
                  <AppTile $bg="radial-gradient(circle at 0 60%, #8fe0ec, transparent 45%), linear-gradient(200deg, #d37a62 5%, #6158bd 45%, #6a35d0 70%, #4a4fc0)">
                    <svg width="26" height="26" viewBox="0 0 26 26" fill="#eceef6" aria-hidden="true"><path d="M13 2q2-1 4 3l1 2L7 24q-3 1-5-3zM15 14q8-1 8 9l-3 1-6-8z" /></svg>
                  </AppTile>
                </SideButton>
                <SideButton $bg="#3b4374" aria-label="ChatGPT"><AppTile $bg="#4f967e"><SiOpenai /></AppTile></SideButton>
                <SideButton $bg="#3b4374" aria-label="Messenger">
                  <svg width="40" height="40" viewBox="0 0 40 40" aria-hidden="true">
                    <defs><linearGradient id="msn" x1="0.100" y1="1" x2="0.900" y2="0"><stop offset="0" stopColor="#3da0f5" /><stop offset="0.400" stopColor="#8f46ee" /><stop offset="0.700" stopColor="#bb4fb4" /><stop offset="1" stopColor="#f37460" /></linearGradient></defs>
                    <path d="M20 0a20 19.500 0 1 1-5 38.500L9 40q-2 0-2-2v-4A20 19.500 0 0 1 20 0z" fill="url(#msn)" />
                    <path d="M8 26l7-10q2-2 5 0l4 3 8-6-7 10q-2 3-5 0l-4-2z" fill="#eceef6" />
                  </svg>
                </SideButton>
                <SideButton $bg="#3b4374" aria-label="WhatsApp">
                  <svg width="42" height="42" viewBox="0 0 42 42" aria-hidden="true">
                    <path d="M1 41l3-10A20 20 0 1 1 11 38z" fill="#eceef3" /><path d="M6 36l2-6a16 16 0 1 1 4 4z" fill="#65d07c" />
                    <path d="M14 11q3-1 4 3l1 3-2 3q2 4 6 5l3-3 4 2q2 1 1 4-3 5-10 2-8-4-10-12 0-5 3-7z" fill="#eceef3" />
                  </svg>
                </SideButton>
                <SideButton $bg="radial-gradient(circle, #000 20px, #3b4374 21px)" $color="#64c875" aria-label="Spotify"><FaSpotify size={48} /></SideButton>
              </AppGroup>
              <SideGroup>
                <SideButton aria-label="J'aime"><Line size={32} d={HEART} /></SideButton>
                <SideButton aria-label="Historique"><Line size={32}><circle cx="16" cy="16" r="15" /><path d="M16 9v8l5 5" /></Line></SideButton>
                <SideButton aria-label="Plus">
                  <svg width="28" height="8" viewBox="0 0 28 8" fill="#d9dbe2" aria-hidden="true"><circle cx="4" cy="4" r="3" /><circle cx="14" cy="4" r="3" /><circle cx="24" cy="4" r="3" /></svg>
                </SideButton>
              </SideGroup>
            </SideBar>

            <Column>
              <TabBar>
                <Tab><TabGlobe />PHP 7.4.33 - phpinfo()</Tab>
                <NewTab aria-label="Nouvel onglet"><Line size={18} sw={5} d="M16 3v26M3 16h26" /></NewTab>
                <TabSearch aria-label="Rechercher dans les onglets"><SearchIcon size={30} /></TabSearch>
              </TabBar>

              <ToolRow>
                <ToolBar>
                  <NavButtons>
                    <IconButton aria-label="Précédent"><Line size={22} sw={3} d="M20 3L9 16l11 13" /></IconButton>
                    <IconButton $color="#5f6170" aria-label="Suivant"><Line size={22} sw={3} d="M12 3l11 13-11 13" /></IconButton>
                    <IconButton aria-label="Recharger"><Line size={26} sw={3}><path d="M28 20A13 13 0 1 1 25 7" /><path d="M28 4v8h-8z" fill="currentColor" strokeWidth="1" /></Line></IconButton>
                  </NavButtons>
                  <Address>
                    <GlobeIcon />
                    <AddressInput type="text" aria-label="Adresse" defaultValue="localhost/info.php" spellCheck={false} />
                  </Address>
                  {EXTENSIONS.map(([name, color, icon]) => <IconButton key={name} $w={60} $color={color} aria-label={name}>{icon}</IconButton>)}
                </ToolBar>
                <SidePanelToggle>
                  <IconButton $w={56} aria-label="Extensions"><Line size={28} d="M16 2l12 6v16l-12 6-12-6V8zM4 8l12 8 12-8M16 16v14" /></IconButton>
                  <AccentBar />
                </SidePanelToggle>
              </ToolRow>

              <Bookmarks>
                {BOOKMARKS.map(([name, Icon]) => <Bookmark key={name} href="#"><Icon />{name}</Bookmark>)}
              </Bookmarks>

              <Viewport>
                <Doc>
                  <InfoBox $bg="#99c"><Title>PHP Version 7.4.33</Title><PhpLogo /></InfoBox>
                  <InfoTable>
                    <colgroup><KeyCol /><col /></colgroup>
                    <tbody>
                      {ROWS.map(([k, v]) => <tr key={k}><KeyCell scope="row">{k}</KeyCell><ValueCell>{v}</ValueCell></tr>)}
                    </tbody>
                  </InfoTable>
                  <InfoBox $bg="#ddd">
                    <Credits>
                      This program makes use of the Zend Scripting Language Engine:<br />
                      Zend Engine v3.4.0, Copyright (c) Zend Technologies<br />
                      &nbsp;&nbsp;&nbsp;&nbsp;with Zend OPcache v7.4.33, Copyright (c), by Zend Technologies
                    </Credits>
                    <ZendLogo />
                  </InfoBox>
                </Doc>
              </Viewport>
            </Column>
          </BrowserWindow>
        </WindowBehind>

        <Dock>
          <DockGroup>{DOCK_TOP.map(renderDockItem)}</DockGroup>
          <DockRule />
          <DockGroup>{DOCK_RUNNING.map(renderDockItem)}</DockGroup>
          <DockRule $last />
          <DockWindows>
            {DOCK_WINDOWS.map(([name, Art]) => <DockWindow key={name} aria-label={name}><Art /></DockWindow>)}
          </DockWindows>
        </Dock>
      </Stage>
    </Desktop>
  );
}
